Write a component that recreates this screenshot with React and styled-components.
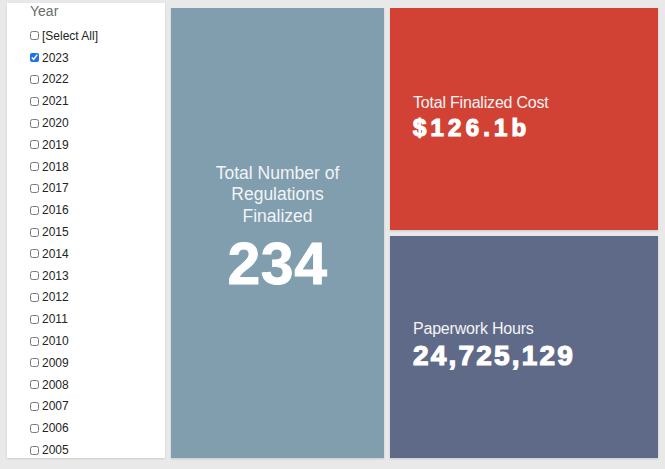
import React from "react";
import styled, { createGlobalStyle } from "styled-components";

const GlobalStyle = createGlobalStyle`
  html, body {
    margin: 0;
    padding: 0;
    background: #e9e9e9;
    font-family: "Liberation Sans", Arial, sans-serif;
  }
`;

const years = [
  2023, 2022, 2021, 2020, 2019, 2018, 2017, 2016, 2015, 2014, 2013, 2012,
  2011, 2010, 2009, 2008, 2007, 2006, 2005,
];

const App = () => {
  return (
    <>
      <GlobalStyle />
      <Dashboard>
        <Slicer>
          <SlicerTitle>Year</SlicerTitle>
          <SlicerList>
            <SlicerItem>
              <Check type="checkbox" readOnly />
              <span>[Select All]</span>
            </SlicerItem>
            {years.map((y) => (
              <SlicerItem key={y}>
                <Check type="checkbox" checked={y === 2023} readOnly />
                <span>{y}</span>
              </SlicerItem>
            ))}
          </SlicerList>
        </Slicer>

        <BigCard>
          <BigLabel>Total Number of Regulations Finalized</BigLabel>
          <BigValue>234</BigValue>
        </BigCard>

        <RightColumn>
          <Card $bg="#d24234">
            <CardLabel>Total Finalized Cost</CardLabel>
            <CardValue $size={24} $spacing={4.2}>$126.1b</CardValue>
          </Card>
          <Card $bg="#5f6a88">
            <CardLabel>Paperwork Hours</CardLabel>
            <CardValue $size={28} $spacing={2.2}>24,725,129</CardValue>
          </Card>
        </RightColumn>
      </Dashboard>
    </>
  );
};

const Dashboard = styled.main`
  display: grid;
  grid-template-columns: 158px 213px 268px;
  column-gap: 6px;
  padding: 8px 7px 11px 7px;
  height: 469px;
  box-sizing: border-box;
`;

const Slicer = styled.section`
  margin-top: -5px;
  background: #ffffff;
  box-shadow: 0 1px 2px rgba(0, 0, 0, 0.12);
  overflow: hidden;
  padding: 0 0 0 23px;
`;

const SlicerTitle = styled.div`
  font-size: 14px;
  color: #6b6b6b;
  line-height: 16px;
`;

const SlicerList = styled.ul`
  list-style: none;
  margin: 6px 0 0 0;
  padding: 0;
`;

const SlicerItem = styled.li`
  display: flex;
  align-items: center;
  gap: 3px;
  height: 21.8px;
  font-size: 12px;
  color: #252423;
`;

const Check = styled.input`
  width: 9px;
  height: 9px;
  margin: 0;
  accent-color: #1a73e8;
`;

const BigCard = styled.section`
  background: #809eae;
  box-shadow: 0 1px 2px rgba(0, 0, 0, 0.15);
  display: flex;
  flex-direction: column;
  align-items: center;
  justify-content: center;
  color: #ffffff;
  text-align: center;
  padding-bottom: 10px;
`;

const BigLabel = styled.div`
  max-width: 150px;
  font-size: 17.5px;
  line-height: 21.5px;
  color: #f2f4f6;
`;

const BigValue = styled.div`
  margin-top: 8px;
  font-size: 59px;
  line-height: 58px;
  font-weight: 700;
  letter-spacing: 0.5px;
  -webkit-text-stroke: 0.8px #ffffff;
`;

const RightColumn = styled.div`
  display: grid;
  grid-template-rows: 222px 222px;
  row-gap: 6px;
`;

const Card = styled.section`
  background: ${({ $bg }) => $bg};
  box-shadow: 0 1px 2px rgba(0, 0, 0, 0.15);
  display: flex;
  flex-direction: column;
  justify-content: center;
  padding: 0 0 3px 23px;
  color: #ffffff;
`;

const CardLabel = styled.div`
  font-size: 16px;
  line-height: 18px;
  letter-spacing: -0.2px;
  color: #f4f4f4;
`;

const CardValue = styled.div`
  margin-top: 2px;
  font-size: ${({ $size }) => $size}px;
  line-height: ${({ $size }) => $size + 3}px;
  letter-spacing: ${({ $spacing }) => $spacing}px;
  font-weight: 700;
  -webkit-text-stroke: 1.2px #ffffff;
`;

export default App;
